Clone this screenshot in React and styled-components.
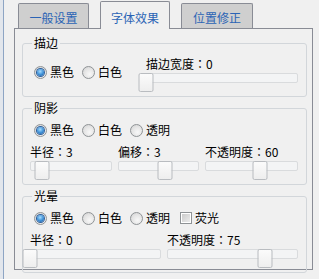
import styled, { createGlobalStyle } from "styled-components";

const Global = createGlobalStyle`
  body {
    margin: 0;
    background: #f0f0f0;
    font-family: "Noto Sans CJK SC", "Liberation Sans", sans-serif;
    font-size: 12px;
    color: #000;
  }
`;

const Screen = styled.div`
  display: flex;
  width: 319px;
  height: 279px;
  overflow: hidden;
`;

const Edge = styled.div`
  width: 3px;
  background: #e2e6ec;
  border-right: 1px solid #8ea5c4;
`;

const Main = styled.div`
  margin-left: 10px;
  width: 299px;
  display: flex;
  flex-direction: column;
`;

const TabRow = styled.div`
  display: flex;
  align-items: flex-end;
  height: 28px;
  padding-left: 4px;
`;

const Tab = styled.div`
  box-sizing: border-box;
  width: ${(p) => p.$w}px;
  margin-left: ${(p) => p.$ml || 0}px;
  height: ${(p) => (p.$active ? 28 : 25)}px;
  padding-top: ${(p) => (p.$active ? 4 : 3)}px;
  margin-bottom: ${(p) => (p.$active ? -1 : 0)}px;
  position: relative;
  z-index: ${(p) => (p.$active ? 1 : 0)};
  border: 1px solid #898c95;
  border-bottom: none;
  border-radius: 2px 2px 0 0;
  background: ${(p) => (p.$active ? "#f0f0f0" : "#cfcfcf")};
  color: #2b64b5;
  display: flex;
  align-items: center;
  justify-content: center;
  line-height: 12px;
`;

const Panel = styled.div`
  box-sizing: border-box;
  height: 242px;
  border: 1px solid #898c95;
  padding: 8px 5px 5px 7px;
  display: flex;
  flex-direction: column;
  gap: 5px;
`;

const Group = styled.fieldset`
  margin: 0;
  border: 1px solid #d2d6da;
  border-radius: 3px;
  padding: 9px 8px 4px 7px;
  min-width: 0;
  display: flex;
  flex-direction: column;
  gap: 9px;
`;

const Legend = styled.legend`
  padding: 0 2px;
  margin-left: 2px;
  line-height: 12px;
  height: 12px;
`;

const Line = styled.div`
  display: flex;
  align-items: flex-start;
`;

const Choices = styled.div`
  display: flex;
  align-items: center;
  gap: 8px;
  height: 14px;
  margin-left: 4px;
  margin-top: ${(p) => p.$mt || 0}px;
`;

const Choice = styled.label`
  display: flex;
  align-items: center;
  gap: 3px;
  line-height: 14px;
  margin-left: ${(p) => p.$ml || 0}px;
`;

const Radio = styled.span`
  box-sizing: border-box;
  width: 13px;
  height: 13px;
  border-radius: 50%;
  border: 1px solid #8f9396;
  background: radial-gradient(circle at 60% 65%, #f8f8f8 0%, #e4e4e4 55%, #cfcfcf 100%);
  display: flex;
  align-items: center;
  justify-content: center;

  &::after {
    content: "";
    display: ${(p) => (p.$on ? "block" : "none")};
    width: 7px;
    height: 7px;
    border-radius: 50%;
    background: radial-gradient(circle at 45% 35%, #a6dcff 0%, #3c8fd6 55%, #184f93 100%);
    box-shadow: 0 0 0 1px #2d5f9c;
  }
`;

const Check = styled.span`
  box-sizing: border-box;
  width: 12px;
  height: 12px;
  border: 1px solid #8f9396;
  background: #fff;
  display: flex;
  align-items: center;
  justify-content: center;

  &::after {
    content: "";
    width: 8px;
    height: 8px;
    background: linear-gradient(135deg, #cbcbcb, #ececec);
  }
`;

const SliderBox = styled.div`
  width: ${(p) => (p.$w ? `${p.$w}px` : "auto")};
  flex: ${(p) => (p.$w ? "none" : 1)};
  margin-left: ${(p) => (p.$push ? "auto" : "0")};
`;

const SliderLabel = styled.div`
  height: 12px;
  line-height: 12px;
  white-space: nowrap;
`;

const Colon = styled.span`
  font-family: "Noto Sans CJK JP", "Noto Sans CJK SC", sans-serif;
`;

const SliderArea = styled.div`
  position: relative;
  height: 19px;
`;

const Track = styled.div`
  box-sizing: border-box;
  margin-top: 3px;
  height: 10px;
  border: 1px solid #d9dbdd;
  border-radius: 2px;
  background: #f3f4f5;
`;

const Thumb = styled.div`
  box-sizing: border-box;
  position: absolute;
  top: 0;
  width: 15px;
  height: 19px;
  transform: translateX(-50%);
  border: 1px solid #b9bcc0;
  border-radius: 2px;
  background: linear-gradient(#fbfbfb, #eeeeee);
`;

const SliderRow = styled.div`
  display: flex;
  gap: 6px;
`;

function Slider({ name, value, pct, w, push }) {
  return (
    <SliderBox $w={w} $push={push}>
      <SliderLabel>
        {name}
        <Colon>：</Colon>
        {value}
      </SliderLabel>
      <SliderArea>
        <Track />
        <Thumb style={{ left: `${pct}%` }} />
      </SliderArea>
    </SliderBox>
  );
}

function Options({ items, mt, glow }) {
  return (
    <Choices $mt={mt}>
      {items.map((t, i) => (
        <Choice key={t}>
          <Radio $on={i === 0} />
          {t}
        </Choice>
      ))}
      {glow && (
        <Choice $ml={2}>
          <Check />
          荧光
        </Choice>
      )}
    </Choices>
  );
}

export default function App() {
  return (
    <Screen>
      <Global />
      <Edge />
      <Main>
        <TabRow>
          <Tab $w={71}>一般设置</Tab>
          <Tab $w={70} $ml={11} $active>
            字体效果
          </Tab>
          <Tab $w={72} $ml={11}>位置修正</Tab>
        </TabRow>
        <Panel>
          <Group>
            <Legend>描边</Legend>
            <Line>
              <Options items={["黑色", "白色"]} mt={7} />
              <Slider name="描边宽度" value="0" pct={0} w={152} push />
            </Line>
          </Group>
          <Group>
            <Legend>阴影</Legend>
            <Options items={["黑色", "白色", "透明"]} />
            <SliderRow>
              <Slider name="半径" value="3" pct={15} w={82} />
              <Slider name="偏移" value="3" pct={58} w={81} />
              <Slider name="不透明度" value="60" pct={59} />
            </SliderRow>
          </Group>
          <Group>
            <Legend>光晕</Legend>
            <Options items={["黑色", "白色", "透明"]} glow />
            <SliderRow>
              <Slider name="半径" value="0" pct={0} />
              <Slider name="不透明度" value="75" pct={75} />
            </SliderRow>
          </Group>
        </Panel>
      </Main>
    </Screen>
  );
}
